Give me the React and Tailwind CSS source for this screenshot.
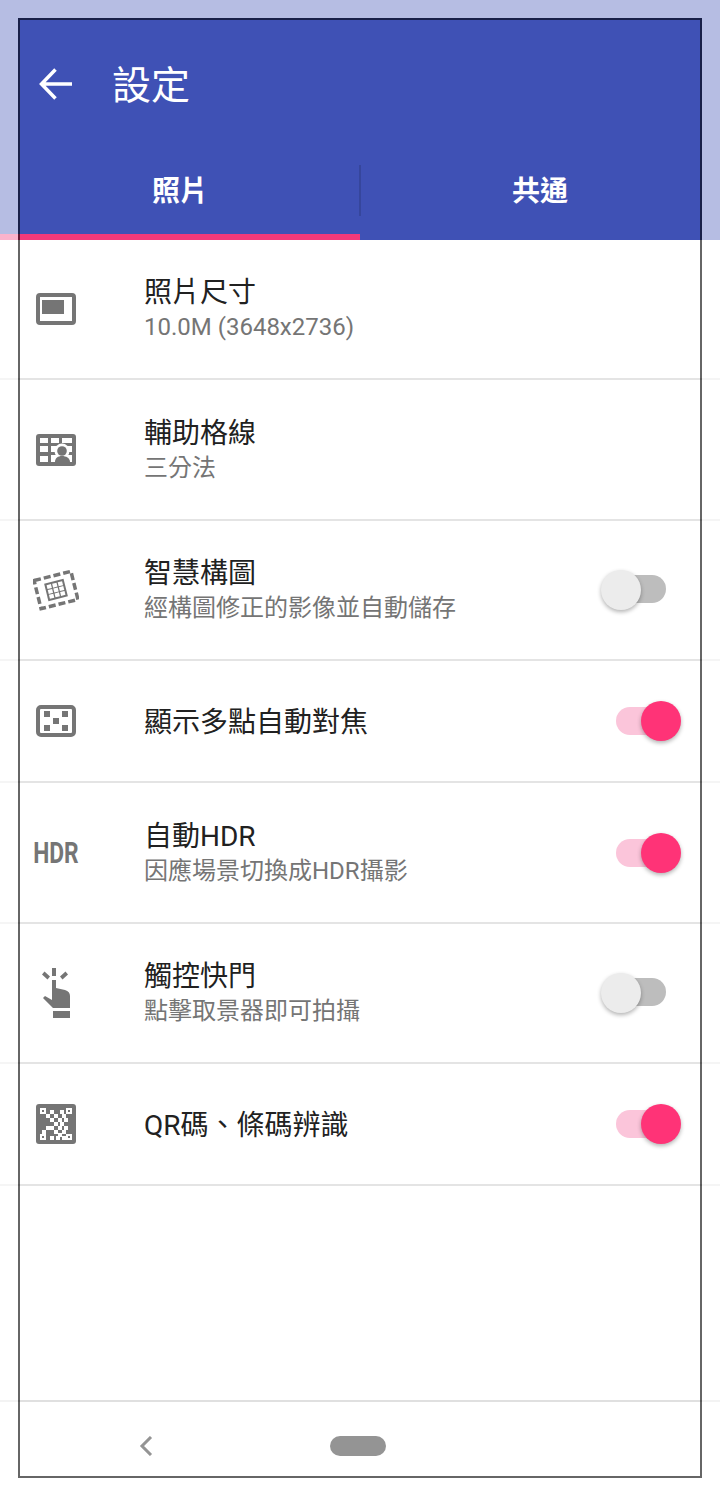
import React from 'react';

const cjk = 'font-["Roboto","Noto_Sans_CJK_TC","Noto_Sans_CJK_SC",sans-serif]';

const SizeIcon = () => (
    <svg width="40" height="32" viewBox="0 0 40 32" fill="none">
        <rect x="2" y="2" width="36" height="28" rx="2" stroke="#757575" strokeWidth="4" />
        <rect x="6" y="7" width="22" height="14" fill="#757575" />
    </svg>
);

const GridIcon = () => (
    <svg width="40" height="32" viewBox="0 0 40 32">
        <rect width="40" height="32" rx="3" fill="#757575" />
        <g fill="#fff">
            <rect x="4" y="4" width="8" height="5" />
            <rect x="15" y="4" width="8" height="5" />
            <rect x="26" y="4" width="10" height="5" />
            <rect x="4" y="12" width="8" height="6" />
            <rect x="4" y="22" width="8" height="6" />
            <rect x="15" y="12" width="21" height="6" />
            <rect x="15" y="21" width="21" height="7" />
            <circle cx="26" cy="17" r="7.500" />
        </g>
        <circle cx="26" cy="17" r="4.800" fill="#757575" />
        <path d="M19 28c0-4 3-6 7-6s8 2 8 6z" fill="#757575" />
    </svg>
);

const ComposeIcon = () => (
    <svg width="46" height="42" viewBox="0 0 46 42" fill="none">
        <g transform="rotate(-14 23 21)">
            <rect x="4" y="6.500" width="38" height="29" stroke="#757575" strokeWidth="3.500" strokeDasharray="7 3" />
            <rect x="13" y="12" width="20" height="18" fill="#757575" />
            <g fill="#fff">
                <rect x="15" y="14" width="4.500" height="4" />
                <rect x="20.750" y="14" width="4.500" height="4" />
                <rect x="26.500" y="14" width="4.500" height="4" />
                <rect x="15" y="19" width="4.500" height="4" />
                <rect x="20.750" y="19" width="4.500" height="4" />
                <rect x="26.500" y="19" width="4.500" height="4" />
                <rect x="15" y="24" width="4.500" height="4" />
                <rect x="20.750" y="24" width="4.500" height="4" />
                <rect x="26.500" y="24" width="4.500" height="4" />
            </g>
        </g>
    </svg>
);

const AfIcon = () => (
    <svg width="40" height="32" viewBox="0 0 40 32" fill="none">
        <rect x="2" y="2" width="36" height="28" rx="3" stroke="#757575" strokeWidth="4" />
        <g fill="#757575">
            <rect x="8" y="6" width="6" height="6" />
            <rect x="26" y="6" width="6" height="6" />
            <rect x="17" y="13" width="6" height="6" />
            <rect x="8" y="20" width="6" height="6" />
            <rect x="26" y="20" width="6" height="6" />
        </g>
    </svg>
);

const HdrIcon = () => (
    <span className='inline-block origin-center scale-x-[0.76] font-["Roboto",sans-serif] text-[30px] leading-none font-bold text-[#757575]'>HDR</span>
);

const TouchIcon = () => (
    <svg width="30" height="50" viewBox="0 0 30 50" fill="#757575">
        <rect x="11" y="0" width="4" height="8" />
        <path d="M1 6.500L3.500 3.500 9 8.500 6.500 11.500zM19 8.500L24.500 3.500 27 6.500 21.500 11.500z" />
        <path d="M11 12h4v8l9 2q5 1.500 5 6v12H12L2 30l2-2 7 4z" />
        <rect x="12" y="43" width="17" height="7" />
    </svg>
);

const QR_CELLS = [
    [14, 6], [24, 6],
    [10, 10], [18, 10], [26, 10],
    [14, 14], [22, 14], [28, 14],
    [18, 18], [24, 18],
    [10, 22], [14, 22], [22, 22], [28, 22],
    [6, 26], [18, 26], [26, 26],
    [22, 29],
    [14, 32], [20, 32], [26, 32],
];

const QrIcon = () => (
    <svg width="40" height="40" viewBox="0 0 40 40">
        <rect width="40" height="40" rx="3" fill="#757575" />
        <g fill="#fff">
            {QR_CELLS.map(([x, y]) => <rect key={`${x}-${y}`} x={x} y={y} width="4" height="4" />)}
            <path fillRule="evenodd" d="M4 4h6v6H4zM6 6v2h2V6zM30 4h6v6h-6zM32 6v2h2V6zM4 30h6v6H4zM6 32v2h2v-2zM30 30h6v6h-6zM32 32v2h2v-2z" />
        </g>
    </svg>
);

const Switch = ({ on }) => (
    <div className={`relative h-7 w-[50px] rounded-full ${on ? 'bg-[#fbc5da]' : 'mb-0.5 bg-[#bdbdbd]'}`}>
        {on
            ? <div className="absolute top-[-6px] left-[25px] size-10 rounded-full bg-[#ff3377] shadow-[0_2px_4px_rgba(0,0,0,0.3)]" />
            : <div className="absolute top-[-5px] left-[-15px] size-10 rounded-full bg-[#ececec] shadow-[0_2px_4px_rgba(0,0,0,0.3)]" />}
    </div>
);

const rows = [
    { icon: <SizeIcon />, title: '照片尺寸', sub: '10.0M (3648x2736)', height: 'h-[140px]' },
    { icon: <GridIcon />, title: '輔助格線', sub: '三分法', height: 'h-[141px]' },
    { icon: <ComposeIcon />, title: '智慧構圖', sub: '經構圖修正的影像並自動儲存', toggle: false, height: 'h-[140px]' },
    { icon: <AfIcon />, title: '顯示多點自動對焦', toggle: true, height: 'h-[122px]' },
    { icon: <HdrIcon />, title: '自動HDR', sub: '因應場景切換成HDR攝影', toggle: true, height: 'h-[141px]' },
    { icon: <TouchIcon />, title: '觸控快門', sub: '點擊取景器即可拍攝', toggle: false, height: 'h-[140px]' },
    { icon: <QrIcon />, title: 'QR碼、條碼辨識', toggle: true, height: 'h-[122px]' },
];

const App = () => {
    return (
        <div className={`relative flex h-[1496px] w-[720px] flex-col overflow-hidden bg-white ${cjk}`}>
            <header className="h-[240px] shrink-0 bg-[#3f51b5] text-white">
                <div className="flex h-[148px] items-center pt-5">
                    <div className="flex w-[112px] justify-center">
                        <svg width="36" height="36" viewBox="0 0 36 36" fill="none" stroke="#fff" strokeWidth="3.500">
                            <path d="M34 18H4M17.500 3.500L3.500 18l14 14.500" />
                        </svg>
                    </div>
                    <h1 className="mt-1 text-[39px] leading-none">設定</h1>
                </div>
                <div className="flex h-[92px]">
                    <div className="flex flex-1 flex-col">
                        <div className="flex h-[86px] items-center justify-center pt-0.5 text-[28px] font-bold">照片</div>
                        <div className="h-1.5 bg-[#f2397a]" />
                    </div>
                    <div className="relative flex h-[86px] flex-1 items-center justify-center pt-0.5 text-[28px] font-bold">
                        <div className="absolute top-[17px] left-[-1px] h-[51px] w-0.5 bg-[#36469c]" />
                        共通
                    </div>
                </div>
            </header>

            {rows.map(row => (
                <div key={row.title} className={`flex shrink-0 items-center border-b-2 border-[#e4e4e4] ${row.height}`}>
                    <div className="flex w-[112px] shrink-0 justify-center">{row.icon}</div>
                    <div className="mt-0.5 ml-8 flex-1">
                        <p className="text-[28px] leading-[35px] text-[#212121]">{row.title}</p>
                        {row.sub && <p className="text-[24px] leading-[35px] text-[#757575]">{row.sub}</p>}
                    </div>
                    {row.toggle !== undefined && <div className="mr-[54px]"><Switch on={row.toggle} /></div>}
                </div>
            ))}

            <div className="flex-1" />
            <nav className="flex h-[96px] shrink-0 items-start gap-[176px] border-t-2 border-[#e0e0e0] pt-[34px] pl-[138px]">
                <svg width="16" height="20" viewBox="0 0 16 20" fill="none" stroke="#949494" strokeWidth="3">
                    <path d="M13 1L4 10l9 9" />
                </svg>
                <div className="h-5 w-14 rounded-full bg-[#949494]" />
            </nav>

            {/* highlight frame, everything outside is washed out */}
            <div className="pointer-events-none absolute top-[18px] left-[18px] h-[1460px] w-[684px] border-2 border-black/60 shadow-[0_0_0_800px_rgba(255,255,255,0.62)]" />
        </div>
    );
};

export default App;
